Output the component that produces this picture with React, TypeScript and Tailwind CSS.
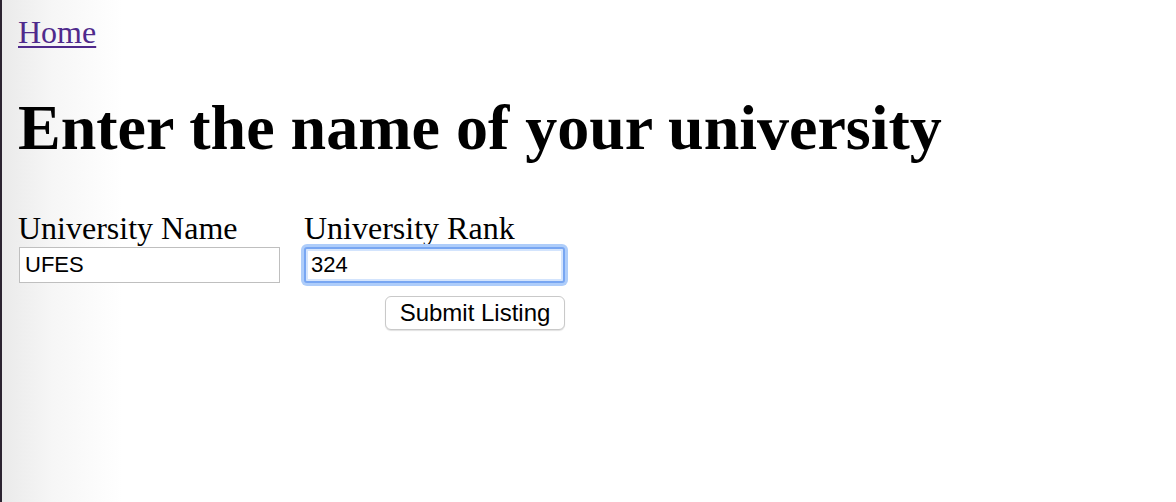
import { useState } from 'react'

const serif = '[font-family:"Liberation_Serif","Times_New_Roman",serif]'

export default function App() {
  const [name, setName] = useState('UFES')
  const [rank, setRank] = useState('324')

  return (
    <div className="min-h-screen border-l-2 border-[#2b2330] bg-[linear-gradient(to_right,#eaeaea_0px,#f6f6f6_50px,#ffffff_120px)] pl-4 pt-[14px] text-black">
      <a
        href="#"
        className={`${serif} text-[32px] leading-[37px] text-[#4f2a8c] underline decoration-[1.5px] underline-offset-[3px]`}
      >
        Home
      </a>

      <h1 className={`${serif} mt-[40px] text-[64px] font-bold leading-[74px]`}>
        Enter the name of your university
      </h1>

      <form className="mt-[44px] flex items-start" onSubmit={(e) => e.preventDefault()}>
        <label className="flex w-[286px] flex-col">
          <span className={`${serif} text-[32px] leading-[38px]`}>University Name</span>
          <input
            value={name}
            onChange={(e) => setName(e.target.value)}
            className="ml-px h-[36px] w-[261px] border border-[#bfbfbf] bg-white px-[5px] font-['Liberation_Sans',Arial,sans-serif] text-[22px] text-black outline-none"
          />
        </label>

        <div className="flex w-[261px] flex-col">
          <label className="flex flex-col">
            <span className={`${serif} text-[32px] leading-[38px]`}>University Rank</span>
            <input
              value={rank}
              onChange={(e) => setRank(e.target.value)}
              className="h-[36px] w-[261px] rounded-[3px] border-2 border-[#78a6f2] bg-white px-[5px] font-['Liberation_Sans',Arial,sans-serif] text-[22px] text-black shadow-[0_0_0_3px_#aecdfa,inset_0_0_0_2px_#d3e4fd] outline-none"
            />
          </label>
          <button
            type="submit"
            className="mt-[13px] h-[34px] w-[180px] self-end rounded-[6px] border border-[#c9c9c9] bg-white font-['Liberation_Sans',Arial,sans-serif] text-[24px] leading-none text-black shadow-[0_1px_1px_rgba(0,0,0,0.12)]"
          >
            Submit Listing
          </button>
        </div>
      </form>
    </div>
  )
}
